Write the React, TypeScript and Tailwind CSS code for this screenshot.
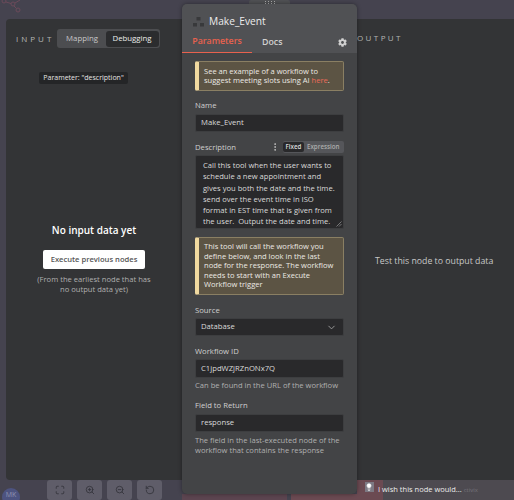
import { ChevronDown, Maximize, ZoomIn, ZoomOut, RotateCcw, Lightbulb, EllipsisVertical } from "lucide-react";
import { FaCog } from "react-icons/fa";

const font = { fontFamily: '"Open Sans", sans-serif' };

function Label({ children }: { children: React.ReactNode }) {
  return <div className="text-[7.7px] leading-[14px] text-[#d0d0d0]">{children}</div>;
}

function Field({ value, tall }: { value: string; tall?: boolean }) {
  return (
    <div className={`flex items-center rounded-[2px] border border-[#3d3e40] bg-[#29292b] px-[5px] text-[7.7px] text-[#dadada] ${tall ? "mt-[1px] h-[19px]" : "mt-[2px] h-[18px]"}`}>
      {value}
    </div>
  );
}

function Callout({ children, className }: { children: React.ReactNode; className: string }) {
  return (
    <div className={`rounded-[2px] border border-[#8a7f63] border-l-[4px] border-l-[#f0d9a0] bg-[#5c5444] pl-[5px] pr-[2px] text-[7.55px] leading-[9.5px] text-[#ecEAe4] ${className}`}>
      {children}
    </div>
  );
}

function ToolButton({ children }: { children: React.ReactNode }) {
  return (
    <div className="flex h-[20px] w-[25px] items-center justify-center rounded-[3px] bg-[#5f5d69] text-[#33323a]">
      {children}
    </div>
  );
}

export default function App() {
  return (
    <div className="relative h-[500px] w-[514px] overflow-hidden bg-[#45434f]" style={font}>
      <svg className="absolute left-0 top-0" width="30" height="14" viewBox="0 0 30 14" fill="none" stroke="#6b4a5a" strokeWidth="1">
        <circle cx="4" cy="1" r="2" />
        <circle cx="13" cy="4" r="2" />
        <circle cx="18" cy="10" r="2" />
        <path d="M6 2 L11 3.5 M14 6 L16.5 8.5 M15 3 L20 0" />
      </svg>

      <div className="absolute left-[249px] top-0 flex h-[6px] w-[41px] items-start justify-center rounded-t-[2px] bg-[#505154] pt-[1px]">
        <div className="grid grid-cols-4 gap-x-[2px] gap-y-[1px]">
          {[0, 1, 2, 3, 4, 5, 6, 7].map((i) => (
            <div key={i} className="h-[1px] w-[1px] bg-[#a8a8a8]" />
          ))}
        </div>
      </div>

      <div className="ml-[6px] mt-[19px] flex h-[461px] w-[540px] rounded-[4px] bg-[#333436]">
        <div className="relative flex w-[176px] shrink-0 flex-col">
          <div className="ml-[10px] mt-[10px] flex h-[19px] items-center">
            <span className="w-[41px] text-[8px] tracking-[3px] text-[#b4b4b4]">INPUT</span>
            <div className="flex h-[19px] w-[103px] items-center rounded-[3px] bg-[#4c4d50] p-[1.5px] text-[7.8px]">
              <span className="w-[47px] text-center text-[#c8c8c8]">Mapping</span>
              <span className="flex h-[16px] w-[53px] items-center justify-center rounded-[3px] bg-[#2b2c2e] text-[#ececec]">Debugging</span>
            </div>
          </div>
          <div className="absolute left-[33px] top-[53px] flex h-[12px] w-[89px] items-center justify-center rounded-[2px] bg-[#242527] text-[7px] text-[#e4e4e4]">
            Parameter: "description"
          </div>
          <div className="mt-[174px] flex flex-col items-center">
            <div className="text-[10px] font-semibold leading-[16px] text-white">No input data yet</div>
            <div className="mt-[12px] flex h-[19px] w-[102px] items-center justify-center rounded-[2px] bg-white text-[7.6px] font-semibold text-[#555]">
              Execute previous nodes
            </div>
            <div className="mt-[5px] w-[120px] text-center text-[7.6px] leading-[10px] text-[#b0b0b0]">
              (From the earliest node that has no output data yet)
            </div>
          </div>
        </div>

        <div className="z-10 -mt-[15px] flex h-[490px] w-[175px] shrink-0 flex-col rounded-[5px] bg-[#434446] shadow-[0_0_4px_rgba(0,0,0,0.4)]">
          <div className="rounded-t-[5px] bg-[#505154]">
            <div className="flex h-[28px] items-center pl-[11px] pt-[8px]">
              <svg width="11" height="10" viewBox="0 0 11 10" fill="#38393b">
                <rect x="3.5" y="0" width="4" height="3.5" />
                <rect x="0" y="6" width="4" height="3.5" />
                <rect x="7" y="6" width="4" height="3.5" />
              </svg>
              <span className="ml-[5px] text-[10.2px] font-medium text-[#ececec]">Make_Event</span>
            </div>
            <div className="relative flex h-[21px] items-center text-[8.8px] font-semibold">
              <span className="flex h-[21px] w-[70px] items-center justify-center border-b border-[#e9614e] text-[#e9614e]">Parameters</span>
              <span className="ml-[10px] text-[#d0d0d0]">Docs</span>
              <FaCog size={9} className="absolute right-[10px] top-[6px] text-[#d0d0d0]" />
            </div>
          </div>

          <div className="flex flex-col px-[13px] pt-[8px]">
            <Callout className="flex h-[30px] flex-col justify-center">
              <div>See an example of a workflow to</div>
              <div>suggest meeting slots using AI <span className="text-[#ea6a58]">here</span>.</div>
            </Callout>

            <div className="mt-[7px]"><Label>Name</Label></div>
            <Field value="Make_Event" />

            <div className="mt-[8px] flex h-[14px] items-center justify-between">
              <Label>Description</Label>
              <div className="flex items-center">
                <EllipsisVertical size={10} className="mr-[3px] text-[#c8c8c8]" />
                <div className="flex h-[12px] w-[61px] items-center rounded-[2px] bg-[#55565a] text-[6.2px] font-semibold">
                  <span className="flex h-[10px] w-[21px] items-center justify-center rounded-[2px] bg-[#29292b] text-[#dcdcdc]">Fixed</span>
                  <span className="ml-[3px] text-[#adadad]">Expression</span>
                </div>
              </div>
            </div>
            <div className="relative mt-[1px] h-[74px] rounded-[2px] border border-[#3d3e40] bg-[#29292b] pl-[7px] pt-[4px] text-[7.6px] leading-[11.3px] text-[#dadada]">
              <div>Call this tool when the user wants to</div>
              <div>schedule a new appointment and</div>
              <div>gives you both the date and the time.</div>
              <div>send over the event time in ISO</div>
              <div>format in EST time that is given from</div>
              <div>the user.&nbsp; Output the date and time.</div>
              <svg className="absolute bottom-[1px] right-[1px]" width="6" height="6" viewBox="0 0 6 6" stroke="#9a9a9a" strokeWidth="0.7">
                <path d="M0.5 5.5 L5.5 0.5 M3 5.5 L5.5 3" />
              </svg>
            </div>

            <Callout className="mt-[8px] flex h-[58px] flex-col justify-center">
              <div>This tool will call the workflow you</div>
              <div>define below, and look in the last</div>
              <div>node for the response. The workflow</div>
              <div>needs to start with an Execute</div>
              <div>Workflow trigger</div>
            </Callout>

            <div className="mt-[8px]"><Label>Source</Label></div>
            <div className="mt-[1px] flex h-[18px] items-center justify-between rounded-[2px] border border-[#3d3e40] bg-[#29292b] px-[5px] text-[7.7px] text-[#dadada]">
              Database
              <ChevronDown size={11} className="mr-[1px] text-[#a0a0a0]" />
            </div>

            <div className="mt-[8px]"><Label>Workflow ID</Label></div>
            <Field value="C1jpdWZjRZnONx7Q" tall />
            <div className="mt-[2px] text-[7.6px] leading-[11px] text-[#b0b0b0]">Can be found in the URL of the workflow</div>

            <div className="mt-[7px]"><Label>Field to Return</Label></div>
            <Field value="response" />
            <div className="mt-[2.5px] text-[7.6px] leading-[10px] text-[#b0b0b0]">The field in the last-executed node of the workflow that contains the response</div>
          </div>
        </div>

        <div className="relative flex grow flex-col">
          <div className="mt-[12px] text-[8px] leading-[14px] tracking-[2.4px] text-[#b4b4b4]">OUTPUT</div>
          <div className="ml-[18px] mt-[209px] text-[8.75px] leading-[14px] text-[#c8c8c8]">Test this node to output data</div>
        </div>
      </div>

      <div className="absolute left-[2px] top-[488px] flex h-[18px] w-[18px] items-start justify-center rounded-full bg-[#4d5380] pt-[2px] text-[7px] leading-[9px] text-[#8f93b0]">
        MK
      </div>
      <div className="absolute left-[47px] top-[480px] flex gap-[5px]">
        <ToolButton><Maximize size={10} /></ToolButton>
        <ToolButton><ZoomIn size={10} /></ToolButton>
        <ToolButton><ZoomOut size={10} /></ToolButton>
        <ToolButton><RotateCcw size={10} /></ToolButton>
      </div>

      <div className="absolute left-[182px] top-[494px] h-[6px] w-[105px] bg-[#5c4550]" />
      <div className="absolute left-[291px] top-[494px] h-[6px] w-[66px] bg-[#6b4a52]" />

      <div className="absolute left-[357px] top-[480px] flex h-[20px] w-[157px] items-center bg-[#4d4a50]">
        <div className="flex h-[20px] w-[26px] items-start justify-center bg-[#6b4a52] pr-[2px] pt-[2px]">
          <div className="flex h-[10px] w-[9px] items-center justify-center bg-[#7d7a84]">
            <Lightbulb size={8} className="text-white" fill="white" />
          </div>
        </div>
        <span className="-ml-[5px] text-[7.5px] text-[#ececec]">I wish this node would...</span>
        <span className="ml-[2px] text-[6px] text-[#75737c]">ctivix</span>
      </div>
    </div>
  );
}
